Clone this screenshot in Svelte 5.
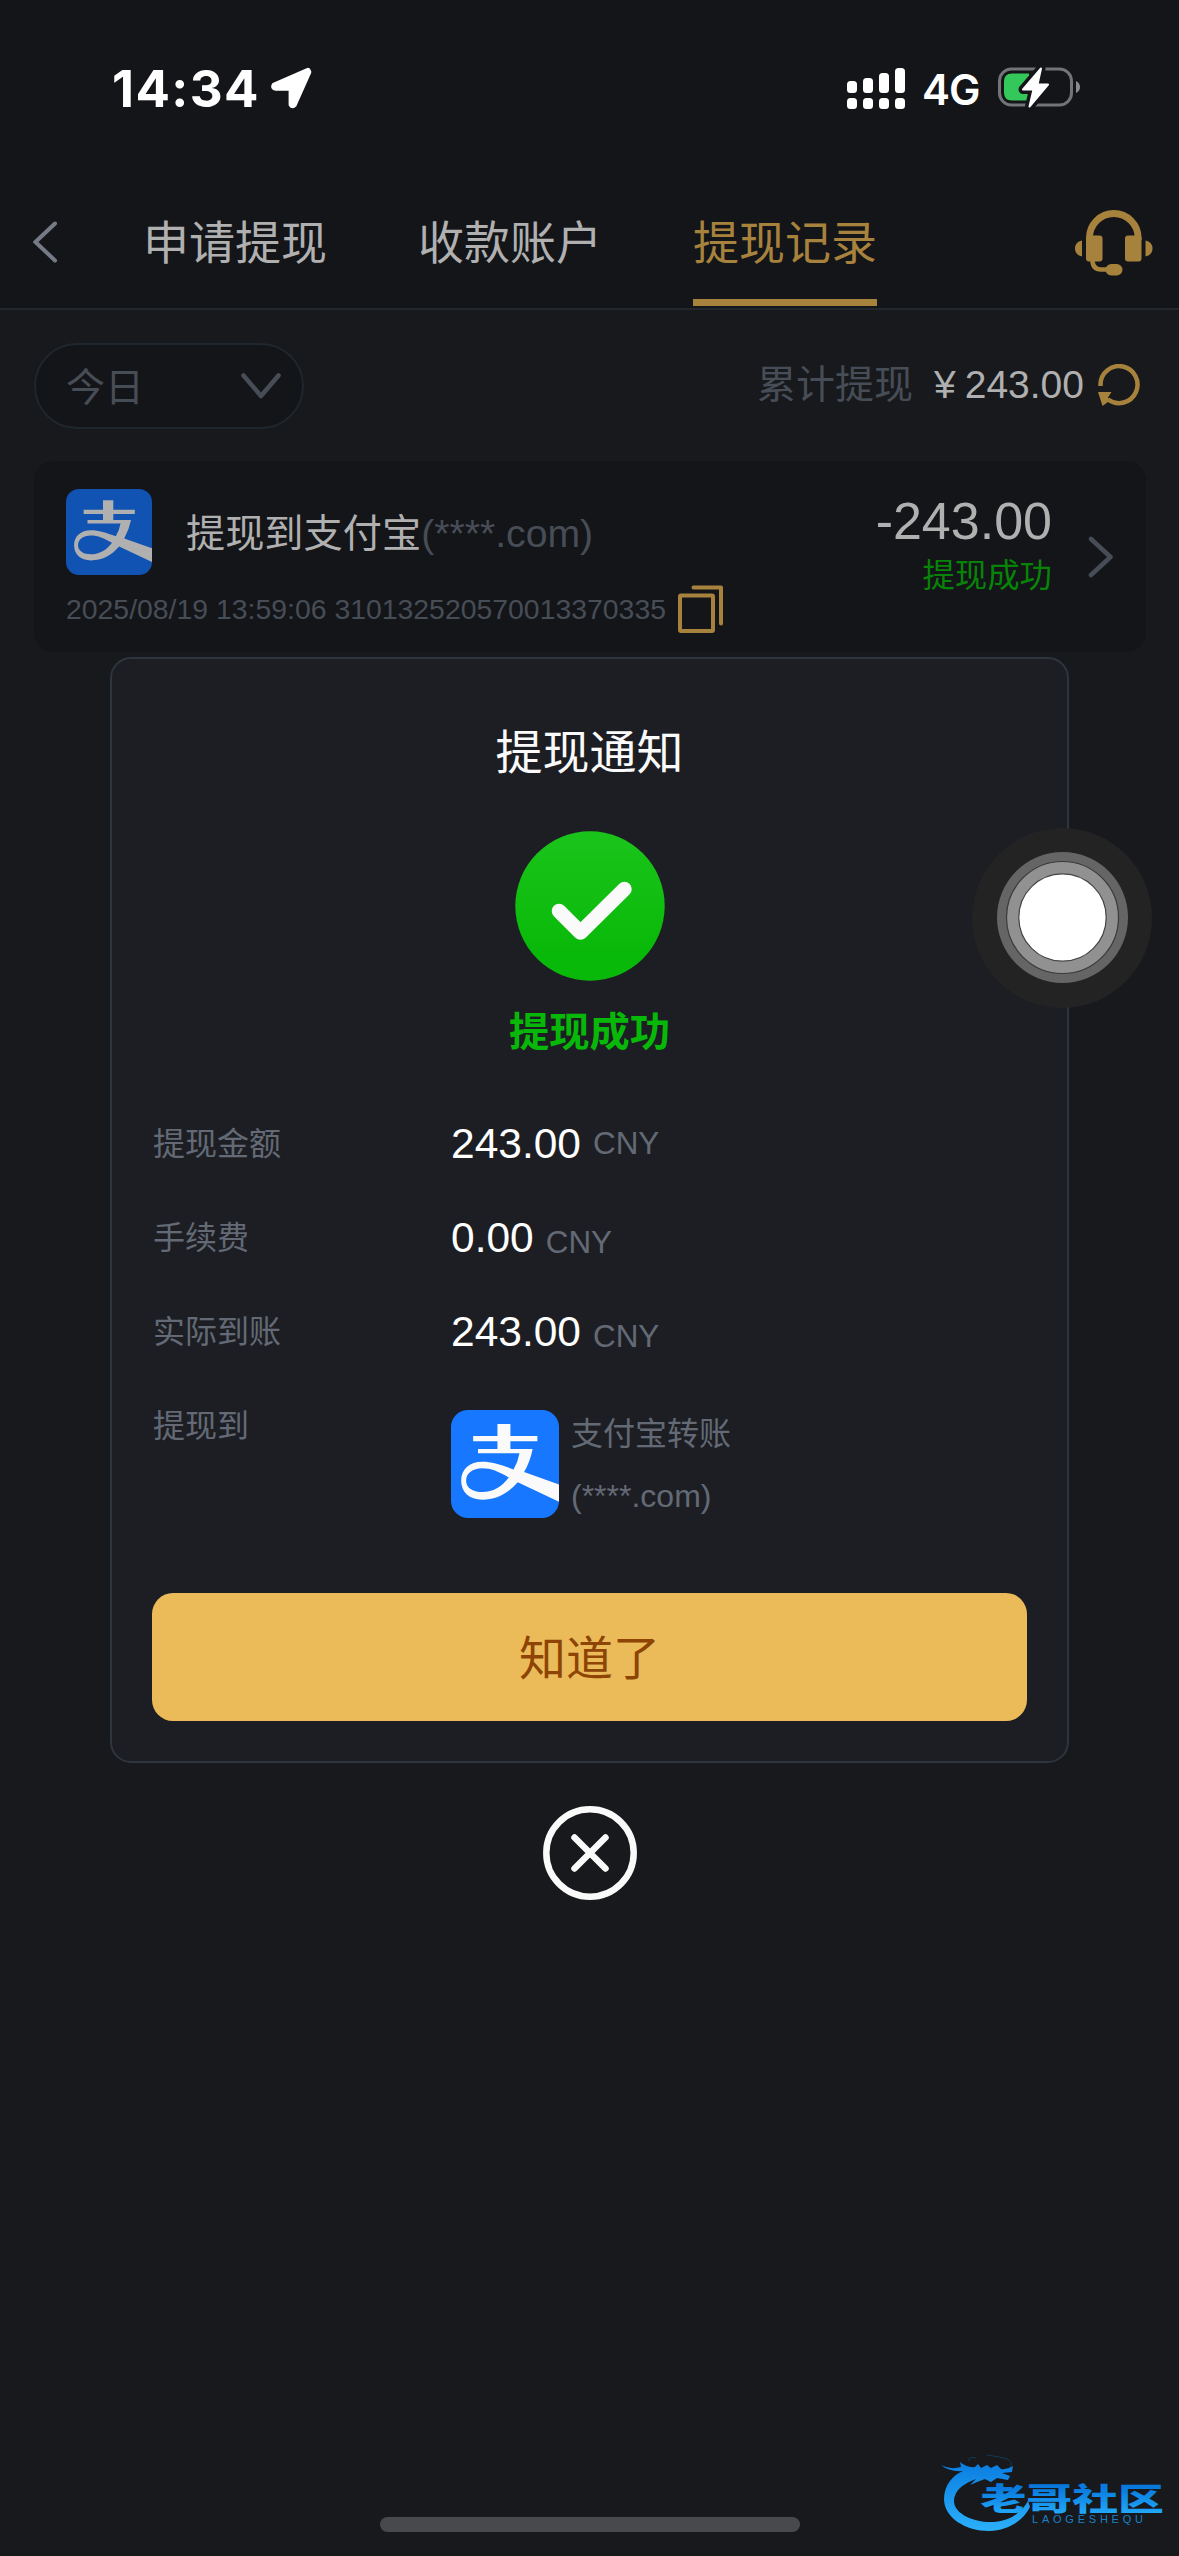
<script lang="ts">
    const tabs = ["申请提现", "收款账户", "提现记录"];
    let activeTab = $state(2);
    let open = $state(true);

    const rows = [
        { label: "提现金额", value: "243.00", raised: true },
        { label: "手续费", value: "0.00", raised: false },
        { label: "实际到账", value: "243.00", raised: false },
    ];

    // Signal bar heights, left to right
    const bars = [12, 15, 20, 25];
</script>

{#snippet alipay()}
    <svg class="alipay" viewBox="0 0 100 100" aria-hidden="true">
        <path
            fill="currentColor"
            fill-rule="evenodd"
            d="M43 13H55V24H80V29H55V36H75.6Q73.5 47 67.7 57.5L100 69V85L61.8 67C52 78 42 83 29 83C17 83 9.4 76 9.4 65.5C9.4 55 17 48 29 48C38 48 47 51 57.9 55Q62 48 63.4 40H25V36H43V29H20.5V24H43ZM53.5 62.5C44 57 37 54 29 54C20 54 14 58.5 14 65.5C14 72 20 76 29 76C39 76 47 71 53.5 62.5Z"
        />
    </svg>
{/snippet}

<div class="screen">
    <div class="status">
        <div class="status-left">
            <span class="clock">14:34</span>
            <svg width="42" height="42" viewBox="0 0 42 42" aria-hidden="true">
                <path
                    d="M37.800 3.900 4.500 18.400Q3.500 20.700 5.500 20.700H21.600V37.500Q22.500 39 23.800 37.500L38.300 5Z"
                    fill="#fff"
                    stroke="#fff"
                    stroke-width="6"
                    stroke-linejoin="round"
                />
            </svg>
        </div>
        <div class="status-right">
            <svg width="58" height="41" viewBox="0 0 58 41" fill="#fff" aria-hidden="true">
                {#each bars as h, i}
                    <rect x={i * 16} y={25 - h} width="10" height={h} rx="3.500" />
                    <rect x={i * 16} y="30" width="10" height="11" rx="3.500" />
                {/each}
            </svg>
            <span class="network">4G</span>
            <svg width="84" height="42" viewBox="0 0 84 42" aria-hidden="true">
                <rect x="1.500" y="2" width="72" height="36" rx="12" fill="none" stroke="#737477" stroke-width="3" />
                <path d="M78 14Q82 16 82 20Q82 24 78 26Z" fill="#8a8b8d" />
                <path d="M14 6.500H31V33.500H14Q6 33.500 6 25.500V14.500Q6 6.500 14 6.500Z" fill="#34c759" />
                <path
                    d="M43 1.500 25 22.500H35.500L31.500 39.500 50 17.500H39.500Z"
                    fill="#141519"
                    stroke="#141519"
                    stroke-width="9"
                    stroke-linejoin="round"
                />
                <path d="M43 1.500 25 22.500H35.500L31.500 39.500 50 17.500H39.500Z" fill="#fff" stroke="#fff" stroke-width="2" stroke-linejoin="round" />
            </svg>
        </div>
    </div>

    <header class="nav">
        <svg class="back" width="26" height="42" viewBox="0 0 26 42" aria-hidden="true">
            <path d="M22 2.500 2.500 21 22 39.500" />
        </svg>
        <div class="tabs">
            {#each tabs as tab, i}
                <button type="button" class="tab" class:tab--active={i === activeTab} onclick={() => (activeTab = i)}>
                    {tab}
                </button>
            {/each}
        </div>
        <svg class="support" width="78" height="66" viewBox="0 0 78 66" aria-hidden="true">
            <path d="M14.500 30V27.800a24.300 24.300 0 0 1 48.600 0V30" fill="none" stroke="currentColor" stroke-width="7" />
            <rect x="11" y="25.500" width="16.500" height="26" rx="3" />
            <rect x="50" y="25.500" width="16.500" height="26" rx="3" />
            <path d="M7 30.500V46.500Q0 45 0 38.500Q0 32 7 30.500ZM70.500 30.500V46.500Q77.500 45 77.500 38.500Q77.500 32 70.500 30.500Z" />
            <path d="M17.500 50Q17.500 59.500 26 59.500H34" fill="none" stroke="currentColor" stroke-width="4.500" />
            <rect x="30.500" y="54" width="17" height="11.500" rx="5.750" />
        </svg>
    </header>

    <main>
        <div class="filter">
            <button type="button" class="range">
                <span>今日</span>
                <svg width="40" height="26" viewBox="0 0 40 26" aria-hidden="true">
                    <path d="M2.500 2.500 20 23 37.500 2.500" />
                </svg>
            </button>
            <div class="total">
                <span class="total-label">累计提现</span>
                <span class="yen">¥</span>
                <span>243.00</span>
                <svg width="42" height="42" viewBox="0 0 42 42" aria-hidden="true">
                    <path d="M2.500 22V20.500a18.500 18.500 0 1 1 7.500 15" fill="none" stroke="#a6823c" stroke-width="4.500" />
                    <path d="M0 28H13.500L10 33.500 12 36.500 4.500 42Z" fill="#a6823c" />
                </svg>
            </div>
        </div>

        <div class="record">
            <div class="record-info">
                <div class="record-title">
                    <span class="pay-icon pay-icon--dim">{@render alipay()}</span>
                    <p>提现到支付宝<span>(****.com)</span></p>
                </div>
                <div class="record-meta">
                    <span>2025/08/19 13:59:06 310132520570013370335</span>
                    <svg width="46" height="48" viewBox="0 0 46 48" aria-hidden="true">
                        <rect x="2" y="10.500" width="33" height="35.500" rx="1" />
                        <path d="M15.500 2.500H43V38.500" />
                    </svg>
                </div>
            </div>
            <div class="record-amount">
                <strong>-243.00</strong>
                <span>提现成功</span>
            </div>
            <svg class="more" width="26" height="42" viewBox="0 0 26 42" aria-hidden="true">
                <path d="M3 3 22.500 21 3 39" />
            </svg>
        </div>
    </main>

    <div class="home-indicator"></div>

    {#if open}
        <div class="overlay" role="dialog" aria-modal="true" aria-label="提现通知">
            <div class="modal">
                <h2>提现通知</h2>
                <svg class="success" width="150" height="150" viewBox="0 0 150 150" aria-hidden="true">
                    <defs>
                        <linearGradient id="green" x1="0" y1="0" x2="0" y2="1">
                            <stop offset="0" stop-color="#1bc41b" />
                            <stop offset="0.8" stop-color="#09b909" />
                        </linearGradient>
                    </defs>
                    <circle cx="75" cy="75" r="74.700" fill="url(#green)" />
                    <path d="M44 80 65.500 101.500 109.500 58" fill="none" stroke="#fafafa" stroke-width="14.500" stroke-linecap="round" stroke-linejoin="round" />
                </svg>
                <p class="result">提现成功</p>
                <dl>
                    {#each rows as row}
                        <div class="row">
                            <dt>{row.label}</dt>
                            <dd>{row.value}<span class="unit" class:unit--raised={row.raised}>CNY</span></dd>
                        </div>
                    {/each}
                    <div class="row row--target">
                        <dt>提现到</dt>
                        <dd>
                            <span class="pay-icon">{@render alipay()}</span>
                            <span class="account">支付宝转账<br />(****.com)</span>
                        </dd>
                    </div>
                </dl>
                <button type="button" class="confirm" onclick={() => (open = false)}>知道了</button>
            </div>
            <button type="button" class="close" aria-label="关闭" onclick={() => (open = false)}>
                <svg width="94" height="94" viewBox="0 0 94 94" aria-hidden="true">
                    <circle cx="47" cy="47" r="43.700" />
                    <path d="M31.500 31.500 62.500 62.500M62.500 31.500 31.500 62.500" />
                </svg>
            </button>
        </div>
    {/if}

    <svg class="assistive" width="180" height="180" viewBox="0 0 180 180" aria-hidden="true">
        <circle cx="90" cy="90" r="90" fill="#232323" />
        <circle cx="90.500" cy="89.500" r="65.500" fill="#656565" />
        <circle cx="90.500" cy="89.500" r="56" fill="#919191" stroke="#3a3a3a" stroke-width="1.200" />
        <circle cx="90.500" cy="89.500" r="43.700" fill="#fff" stroke="#444" stroke-width="1.200" />
    </svg>

    <svg class="watermark" width="229" height="84" viewBox="0 0 229 84" aria-hidden="true">
        <defs>
            <linearGradient id="arc" x1="0" y1="0" x2="0" y2="1">
                <stop offset="0" stop-color="#0a7de0" />
                <stop offset="1" stop-color="#2bb0fb" />
            </linearGradient>
            <linearGradient id="word" x1="0" y1="0" x2="0" y2="1">
                <stop offset="0.3" stop-color="#0878dd" />
                <stop offset="0.9" stop-color="#22a9f8" />
            </linearGradient>
        </defs>
        <path
            fill="url(#arc)"
            d="M0 10Q9 15 20 12L19 7Q26 13 34 12L37 9 40 13 46 10 50 13 56 10 60 14Q66 15 72 11L71 17 61 18 69 21 67 25 56 23 50 27 44 24 36 27 29 30 35 24Q13 32 13 46C13 59 33 67 49 67C66 67 80 59 87 46L89 52C82 66 66 76 48 76C25 76 3 63 3 44C3 30 12 20 22 16Q8 17 0 10Z"
        />
        <path d="M28 6Q27 1 35 3M46 0Q60 2 66 4Q73 7 69 12" fill="none" stroke="#123a58" stroke-width="1" />
        <g transform="translate(39.500 54.500) scale(1.480 1)">
            <text class="brand" fill="url(#word)">老哥社区</text>
        </g>
        <text class="brand-latin" x="91" y="68" textLength="111" fill="#1a80c6">LAOGESHEQU</text>
    </svg>
</div>

<style>
    :global(body) {
        margin: 0;
        background: #17191c;
    }

    .screen {
        position: relative;
        display: flex;
        flex-direction: column;
        width: 1179px;
        height: 2556px;
        overflow: hidden;
        background: #17191c;
        font-family: "Liberation Sans", "Noto Sans CJK SC", sans-serif;
        color: #b0b0b0;
    }

    svg {
        display: block;
        flex: none;
    }

    button {
        border: 0;
        padding: 0;
        background: none;
        font: inherit;
        color: inherit;
        cursor: pointer;
    }

    p,
    h2,
    dl,
    dd {
        margin: 0;
    }

    /* Status bar */
    .status {
        display: flex;
        justify-content: space-between;
        align-items: center;
        height: 176px;
        padding: 0 97px 0 112px;
        background: #141519;
        font-family: Inter, sans-serif;
        color: #fff;
    }

    .status-left,
    .status-right {
        display: flex;
        align-items: center;
    }

    .clock {
        width: 158px;
        font-size: 51px;
        font-weight: 700;
        letter-spacing: 1.4px;
    }

    .network {
        width: 76px;
        margin-left: 17px;
        font-size: 42px;
        font-weight: 600;
        letter-spacing: -1px;
        padding-top: 2px;
    }

    /* Navigation */
    .nav {
        display: flex;
        align-items: center;
        height: 132px;
        padding: 0 26px 0 33px;
        border-bottom: 2px solid #21272d;
        background: #141519;
    }

    .back {
        fill: none;
        stroke: #747b86;
        stroke-width: 4;
        stroke-linecap: round;
    }

    .tabs {
        display: flex;
        flex: 1;
        gap: 91px;
        height: 132px;
        margin-left: 84px;
    }

    .tab {
        box-sizing: border-box;
        height: 130px;
        padding-bottom: 5px;
        border-top: 7px solid transparent;
        border-bottom: 7px solid transparent;
        font-size: 46px;
        white-space: nowrap;
    }

    .tab--active {
        border-bottom-color: #a6823c;
        color: #a6823c;
    }

    .support {
        margin-top: 2px;
        fill: currentColor;
        color: #a6823c;
    }

    /* Filter row */
    main {
        padding: 33px 33px 0 34px;
    }

    .filter {
        display: flex;
        justify-content: space-between;
        align-items: center;
        font-size: 39px;
    }

    .range {
        display: flex;
        justify-content: space-between;
        align-items: center;
        box-sizing: border-box;
        width: 270px;
        height: 86px;
        padding: 0 21px 0 30px;
        border: 2px solid #20262d;
        border-radius: 43px;
        background: #141519;
        color: #474d56;
    }

    .range span {
        padding-bottom: 5px;
    }

    .range svg,
    .more {
        fill: none;
        stroke: #474d56;
        stroke-width: 4.5;
        stroke-linecap: round;
        stroke-linejoin: round;
    }

    .total {
        display: flex;
        align-items: center;
        padding: 0 6px 3px 0;
        line-height: 56px;
    }

    .total-label {
        color: #474d56;
    }

    .yen {
        margin: 0 9px 0 21px;
    }

    .total svg {
        margin-left: 14px;
    }

    /* Record card */
    .record {
        display: flex;
        box-sizing: border-box;
        height: 191px;
        margin-top: 32px;
        padding: 28px 32px 0;
        border-radius: 20px;
        background: #141519;
    }

    .record-info {
        flex: 1;
    }

    .record-title {
        display: flex;
        align-items: center;
        gap: 34px;
        font-size: 39.2px;
    }

    .record-title p {
        padding-bottom: 4px;
    }

    .record-title span:not(.pay-icon),
    .record-meta {
        color: #474d56;
    }

    .pay-icon {
        flex: none;
        width: 108px;
        height: 108px;
        border-radius: 17px;
        overflow: hidden;
        background: #1777ff;
        color: #fafafa;
    }

    .pay-icon--dim {
        width: 86px;
        height: 86px;
        border-radius: 13px;
        background: #1053b2;
        color: #b0b0b0;
    }

    .alipay {
        width: 100%;
        height: 100%;
    }

    .record-meta {
        display: flex;
        align-items: center;
        gap: 12px;
        margin-top: 10px;
        font-size: 28.4px;
    }

    .record-meta svg {
        fill: none;
        stroke: #a6823c;
        stroke-width: 4;
        stroke-linecap: round;
        stroke-linejoin: round;
    }

    .record-amount {
        display: flex;
        flex-direction: column;
        align-items: flex-end;
        margin-right: 36px;
    }

    .record-amount strong {
        font-size: 52px;
        font-weight: 400;
        line-height: 64px;
    }

    .record-amount span {
        color: #078407;
        font-size: 32.4px;
        line-height: 46px;
    }

    .more {
        margin-top: 47px;
    }

    /* Modal */
    .overlay {
        position: absolute;
        inset: 0;
        display: flex;
        flex-direction: column;
        align-items: center;
        justify-content: center;
        gap: 43px;
    }

    .modal {
        display: flex;
        flex-direction: column;
        align-items: center;
        box-sizing: border-box;
        width: 959px;
        height: 1106px;
        padding: 60px 40px 40px;
        border: 2px solid #2e353f;
        border-radius: 21px;
        background: #1d1e23;
    }

    .modal h2 {
        color: #fafafa;
        font-size: 47px;
        font-weight: 400;
        line-height: 68px;
    }

    .success {
        margin-top: 44px;
    }

    .result {
        margin-top: 22px;
        color: #08b808;
        font-size: 40.3px;
        font-weight: 700;
        line-height: 60px;
    }

    dl {
        align-self: stretch;
        margin-top: 34px;
    }

    .row {
        display: flex;
        height: 94px;
        color: #636a75;
        font-size: 32px;
        line-height: 94px;
    }

    dt {
        width: 298px;
        padding-left: 1px;
    }

    .row dd {
        color: #fff;
        font-size: 42.5px;
    }

    .unit {
        position: relative;
        top: 1px;
        margin-left: 12px;
        color: #636a75;
        font-size: 31.4px;
    }

    .unit--raised {
        top: -4px;
    }

    .row--target {
        height: 128px;
    }

    .row--target dd {
        display: flex;
        align-items: flex-start;
        gap: 12px;
        padding-top: 31px;
        color: #636a75;
        font-size: 32px;
    }

    .account {
        line-height: 62px;
        margin-top: -7px;
    }

    .confirm {
        width: 875px;
        height: 128px;
        margin-top: auto;
        padding-bottom: 5px;
        border-radius: 21px;
        background: #ebbb59;
        color: #8d4405;
        font-size: 47px;
    }

    .close {
        padding-left: 1px;
    }

    .close svg {
        fill: none;
        stroke: #fafafa;
        stroke-width: 6.5;
        stroke-linecap: round;
    }

    .assistive {
        position: absolute;
        top: 828px;
        left: 972px;
    }

    .home-indicator {
        width: 420px;
        height: 15px;
        margin: auto auto 24px;
        border-radius: 8px;
        background: #48494c;
    }

    .watermark {
        position: absolute;
        right: 9px;
        bottom: 17px;
        overflow: visible;
    }

    .brand {
        font-family: "Noto Sans CJK SC", sans-serif;
        font-size: 31px;
        font-weight: 900;
    }

    .brand-latin {
        font-size: 11px;
    }
</style>
